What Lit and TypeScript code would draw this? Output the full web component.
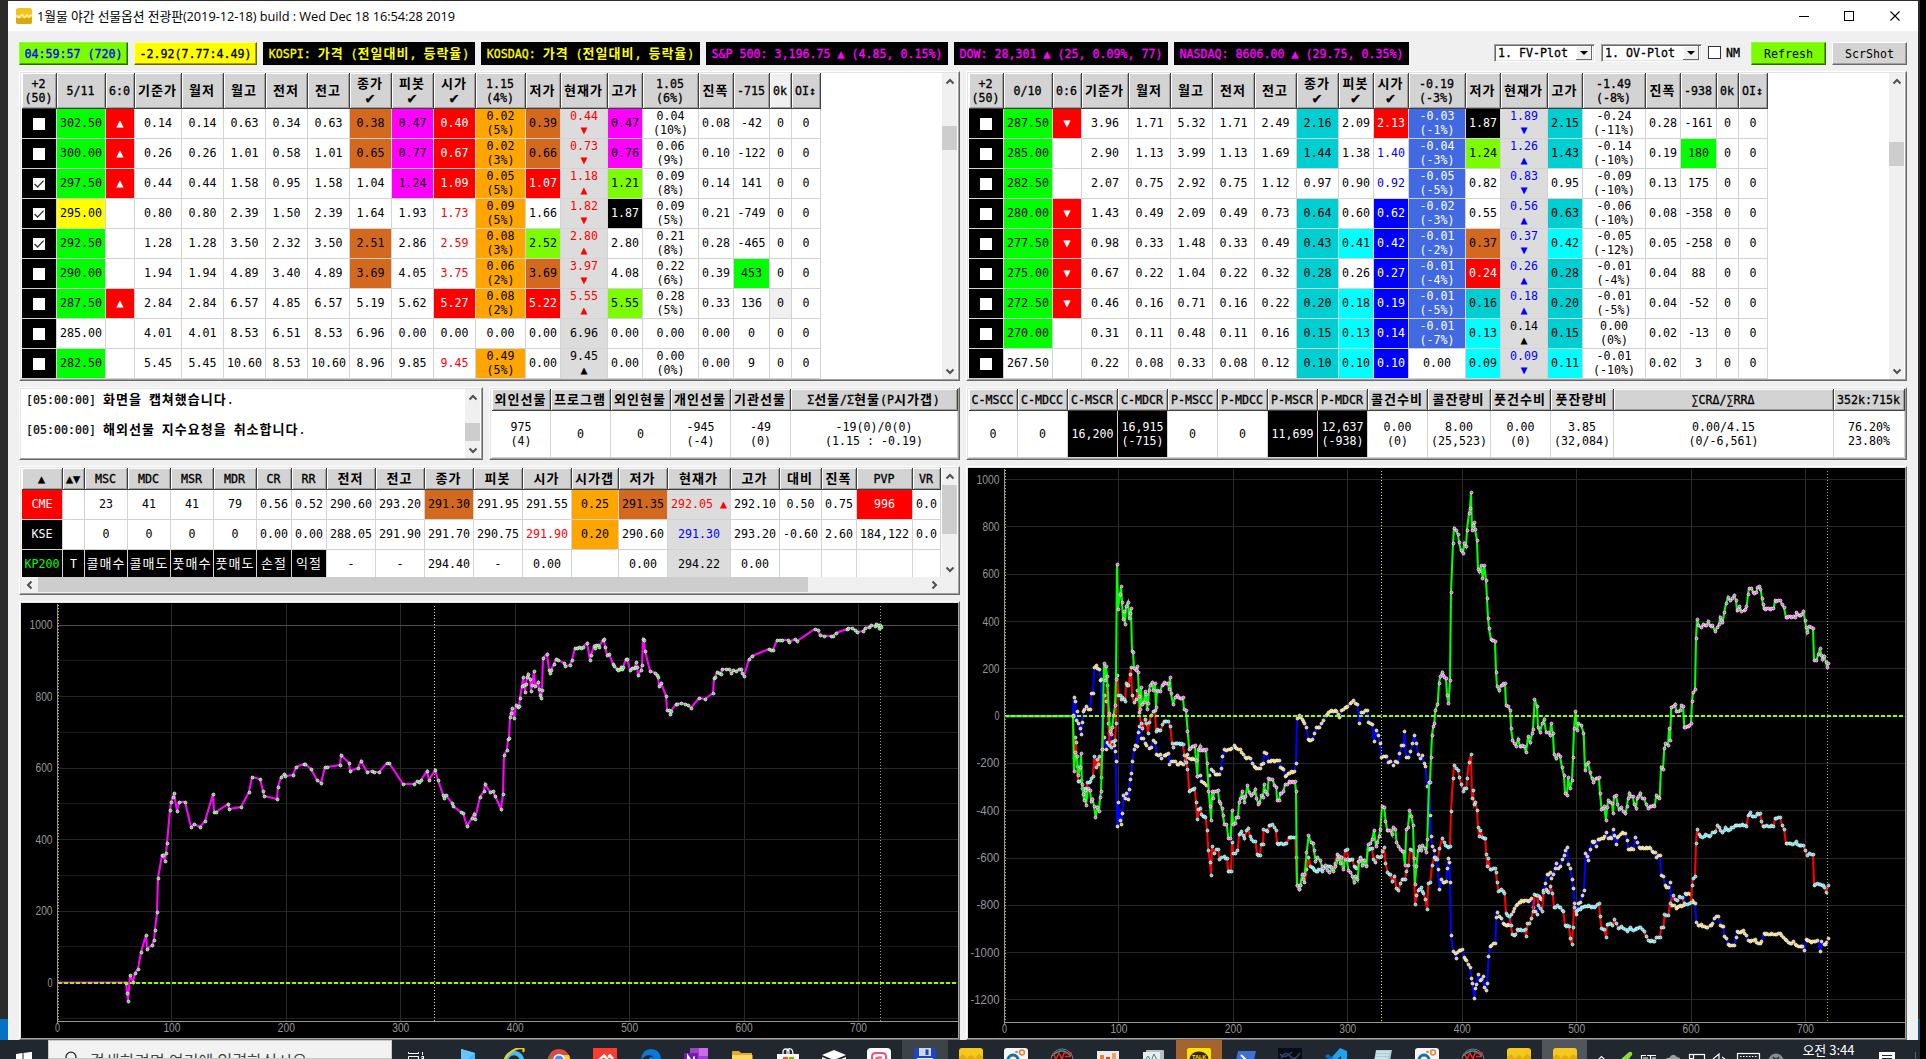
import { LitElement, html, svg, css, nothing } from "lit";
import { customElement, property } from "lit/decorators.js";

/* Splits Hangul runs out so that they can take their own face and pitch. */
function mixed(text: string) {
  return text
    .split(/([\uac00-\ud7a3]+)/)
    .filter((part) => part !== "")
    .map((part) => (/[\uac00-\ud7a3]/.test(part) ? html`<span class="ko">${part}</span>` : part));
}

const textBase = css`
  * { box-sizing: border-box; }
  .ko { font-family: "Noto Sans CJK KR", sans-serif; font-size: 13px; letter-spacing: 1px; line-height: 12px; margin-right: 0; }
`;

const chevron = (dir: string) => {
  const d: Record<string, string> = {
    up: "M1.5 6.5 L5 3 L8.5 6.5",
    down: "M1.5 3.5 L5 7 L8.5 3.5",
    left: "M6.5 1.5 L3 5 L6.5 8.5",
    right: "M3.5 1.5 L7 5 L3.5 8.5",
  };
  return html`<svg width="10" height="10" viewBox="0 0 10 10"><path d=${d[dir]} fill="none" stroke="#505050" stroke-width="2"/></svg>`;
};

/* ---------- scroll bar ---------- */
@customElement("scroll-bar")
class ScrollBar extends LitElement {
  @property() dir = "v";
  @property({ type: Number }) before = 0;
  @property({ type: Number }) size = 20;
  static styles = css`
    :host { display: block; flex: none; background: #f0f0f0; }
    .bar { display: flex; height: 100%; width: 100%; align-items: center; }
    .v { flex-direction: column; }
    .btn { width: 15px; height: 17px; flex: none; display: flex; align-items: center; justify-content: center; }
    .h .btn { width: 17px; height: 15px; }
    .thumb { background: #cdcdcd; flex: none; width: 15px; }
    .h .thumb { height: 15px; }
    .fill { flex: 1; }
    .gap { flex: none; }
  `;
  render() {
    const v = this.dir === "v";
    const prop = v ? "height" : "width";
    return html`<div class="bar ${this.dir}">
      <div class="btn">${chevron(v ? "up" : "left")}</div>
      <div class="gap" style="${prop}:${this.before}px"></div>
      <div class="thumb" style="${prop}:${this.size}px"></div>
      <div class="fill"></div>
      <div class="btn">${chevron(v ? "down" : "right")}</div>
    </div>`;
  }
}

/* ---------- quote grid ----------
   A cell is "text~style"; "_" breaks the line, "." alone is empty, "#0" and "#1" are check boxes. */
@customElement("quote-grid")
class QuoteGrid extends LitElement {
  @property({ attribute: false }) widths: number[] = [];
  @property({ attribute: false }) head: string[] = [];
  @property({ attribute: false }) rows: string[][] = [];
  @property({ type: Number }) headHeight = 22;
  @property({ type: Number }) rowHeight = 30;
  static styles = [
    textBase,
    css`
      :host { display: block; flex: none; overflow: hidden; background: #fff; font: 11.63px/14px "DejaVu Sans Mono", monospace; color: #000; }
      .row { display: grid; }
      .cell { display: flex; align-items: center; justify-content: center; text-align: center; white-space: pre;
        border-right: 1px solid #d3d3d3; border-bottom: 1px solid #d3d3d3; overflow: hidden; }
      .cell .ko { font-weight: 400; }
      .td { padding-bottom: 1px; }
      .th { background: #d3d3d3; border-right: 1px solid #404040; border-bottom: 1px solid #404040;
        box-shadow: inset 1px 1px #fff, inset -1px -1px #a0a0a0; -webkit-text-stroke: 0.3px #000; padding: 1px 1px 0 0; }
      .th .ko { font-weight: 700; -webkit-text-stroke: 0; }
      .th.hot { background: #f0f0f0; }
      .tick { font-size: 15px; }
      .g { background: #00ff00; } .y { background: #ffff00; } .c { background: #d2691e; } .m { background: #ff00ff; }
      .r { background: #ff0000; color: #fff; } .R { color: #ff0000; } .B { color: #0000ff; } .o { background: #ffa500; }
      .w { background: #7cfc00; } .k { background: #000; color: #fff; } .s { background: #dcdcdc; border-bottom-color: #d6d6d6; }
      .sr { background: #dcdcdc; color: #ff0000; } .sb { background: #dcdcdc; color: #0000ff; }
      .t { background: #00ced1; } .a { background: #00ffff; } .b { background: #0000ff; color: #fff; }
      .l { background: #4169e1; color: #fff; } .kg { background: #000; color: #00ff00; } .f { background: #f0f0f0; }
      .box { width: 12px; height: 12px; display: block; background: #fff; margin-top: 1px; }
    `,
  ];
  private content(t: string) {
    if (t === ".") return nothing;
    if (t === "#0" || t === "#1")
      return html`<svg class="box" viewBox="0 0 12 12">${t === "#1" ? svg`<path d="M1.5 6 L4.6 9 L10.6 2.6" fill="none" stroke="#333" stroke-width="1.3"/>` : nothing}</svg>`;
    const lines = t.split("_");
    return html`<div>${lines.map((l) => html`<div>${l === "✔" ? html`<span class="tick">✔</span>` : mixed(l)}</div>`)}</div>`;
  }
  private line(cells: string[], extra: string, h: number) {
    const cols = this.widths.map((w) => w + "px").join(" ");
    return html`<div class="row" style="grid-template-columns:${cols};height:${h}px">
      ${cells.map((c) => {
        const [t, k = ""] = c.split("~");
        return html`<div class="cell ${extra} ${k}">${this.content(t)}</div>`;
      })}
    </div>`;
  }
  render() {
    return html`${this.line(this.head, "th", this.headHeight)}${this.rows.map((r) => this.line(r, this.rowHeight === 30 ? "td" : "", this.rowHeight))}`;
  }
}

/* ---------- line plots ---------- */
interface Series { line: string; dot: string; points: number[][]; }
interface Plot {
  left: number; top: number; width: number; height: number;
  axisX: number; zeroY: number; perUnit: number; labels: number[]; minor: number[]; series: Series[];
}

const pairs = (text: string, dx: number, ox: number, oy: number, ky: number): number[][] =>
  text.trim().split(/\s+/).map((p) => {
    const [x, y] = p.split(",").map(Number);
    return [ox + (x + dx) / 3, oy + y / ky];
  });

function dense(points: number[][]): number[][] {
  const out: number[][] = [];
  points.forEach((p, i) => {
    out.push(p);
    const n = points[i + 1];
    if (!n) return;
    const dx = n[0] - p[0];
    const steps = Math.round(dx / 1.6);
    if (steps > 1 && Math.abs(n[1] - p[1]) < 7)
      for (let s = 1; s < steps; s++) out.push([p[0] + (dx * s) / steps, p[1] + ((n[1] - p[1]) * s) / steps + (s % 2 ? 0.5 : -0.4)]);
  });
  return out;
}

const FV = [
  ...pairs(`378,1179 381,1209 384,1233 390,1155 399,1176 405,1149 414,1137 423,1086 438,1035 441,1077 456,1065 462,1050 465,1020 471,966 474,864 486,795 489,795 495,813 498,789 501,759 510,660 513,636 519,621 522,609 531,663 537,636 555,636 573,711 582,702 600,711 615,693 639,612 642,666 648,666 684,642 687,657 723,651 747,606 756,561 780,567 789,603 792,618 831,627 834,591 843,561 852,552 855,558 879,555 888,531 912,522 915,522 933,537 951,570 963,579 975,531 981,531 1020,525 1023,495 1047,519 1050,543 1074,534 1083,513 1101,546 1116,543 1122,546 1137,546 1161,519 1167,519 1209,582 1242,582 1251,573 1257,576 1263,570 1281,543 1287,570 1305,540 1314,570 1329,615 1332,624 1338,615 1356,639 1359,648 1383,666 1389,669 1401,708 1416,684 1422,672 1425,687 1440,621 1452,603 1455,582 1470,606 1479,603 1485,618`, 0, 0, 590, 3),
  ...pairs(`63,657 69,612 72,495 81,480 84,447 87,444 90,381 93,369 96,354 102,384 108,345 114,351 117,348 120,324 126,288 129,261 132,285 135,306 138,282 141,261 144,252 150,267 153,303 156,285 162,243 165,288 174,276 177,297 180,315 183,324 186,300 189,204 201,192 207,240 210,249 213,240 222,222 228,207 234,210 252,219 255,228 270,225 276,210 285,174 291,174 297,171 303,174 309,171 321,159 330,210 333,195 342,168 345,174 348,165 354,165 357,171 369,150 372,147 375,171 381,195 387,192 399,222 402,228 411,237 414,240 420,237 423,231 426,237 429,231 438,207 441,207 450,240 456,234 462,234 465,231 468,216 471,231 474,255 483,240 486,225 489,147 492,150 495,183 510,243 525,249 531,255 534,261 537,288 543,279 558,318 561,360 567,360 570,372 573,363 588,342 591,342 603,339 615,342 624,345 633,354 657,324 675,327 699,309 702,264 705,261 711,246 717,249 723,252 726,237 738,237 747,237 753,249 759,240 768,243 777,237 783,237 786,249 792,258 807,207 816,198 867,177 873,180 879,180 891,150 900,150 906,150 924,150 927,156 945,147 951,153 1005,117 1014,120 1020,135 1032,138 1053,138 1059,138 1068,129 1101,117 1104,114 1116,114 1125,120 1131,126 1149,123 1155,114 1167,111 1173,105 1185,108 1188,102 1194,105 1197,114 1200,105 1203,111`, 1440, 0, 590, 3),
];

const KY = 2.6177;
const ov = (a: string, b: string) => [...pairs(a, 0, 960, 459.4, KY), ...pairs(b, 1440, 960, 459.4, KY)];

const OV_BLUE = ov(
  `339,668 342,620 345,631 348,682 351,657 354,690 360,703 363,717 366,685 370,656 374,652 378,643 384,653 390,652 394,610 399,610 403,541 408,537 413,546 418,548 421,576 424,574 427,757 433,725 438,757 442,738 446,740 449,715 453,738 459,738 463,745 465,762 468,788 471,958 474,895 480,943 483,952 487,924 490,876 496,885 500,873 504,888 507,862 510,835 514,820 517,788 522,756 527,745 531,750 534,713 539,697 543,728 550,727 555,740 560,747 567,753 573,752 579,733 586,738 590,769 600,771 605,780 612,772 620,769 626,768 629,797 634,787 645,787 651,796 661,791 669,795 675,785 683,770 689,781 698,780 707,784 711,786 713,828 720,826 725,840 733,846 740,850 747,824 753,810 759,815 765,822 778,822 784,806 788,776 794,757 805,757 815,754 822,746 830,753 841,757 849,770 855,779 871,780 877,794 882,800 890,806 900,806 905,795 910,793 913,765 920,766 925,787 940,786 957,785 961,803 971,810 976,827 985,820 993,815 1004,814 1008,793 1011,675 1018,668 1026,677 1034,688 1040,698 1044,730 1052,733 1058,731 1064,714 1070,700 1078,698 1085,688 1091,680 1098,668 1106,659 1115,655 1130,656 1138,672 1145,655 1155,648 1163,643 1170,636 1180,628 1186,636 1193,638 1198,688 1205,659 1221,655 1226,685 1236,692 1242,735 1249,707 1255,720 1260,740 1265,779 1270,775 1280,775 1285,790 1292,787 1299,798 1306,788 1313,791 1319,767 1325,747 1330,747 1334,710 1338,779 1345,779 1352,762 1358,740 1363,720 1369,740 1374,770 1380,780 1387,773 1392,793 1397,800 1401,853 1408,842 1410,930 1413,985 1417,1010 1422,1020 1427,1045 1434,1071 1438,1122 1443,1098 1450,1105 1458,1103 1462,1068 1465,1042 1468,1052 1470,1105 1473,1243 1479,1285 1486,1292`,
  `48,1305 51,1288 58,1283 66,1281 72,1300 80,1308 84,1320 90,1327 94,1356 98,1370 102,1408 106,1382 110,1372 114,1346 120,1362 129,1352 133,1380 138,1388 141,1370 146,1298 150,1272 160,1265 166,1264 169,1196 171,1183 177,1193 184,1200 190,1212 198,1217 210,1217 214,1190 220,1180 228,1165 237,1158 245,1152 258,1153 265,1155 274,1147 279,1170 285,1180 291,1190 297,1142 305,1150 311,1125 316,1108 322,1083 330,1080 334,1094 340,1085 345,1068 348,1055 355,1068 361,1064 366,1044 372,1035 375,1020 381,1013 385,1058 391,1068 396,1097 400,1120 404,1160 409,1188 414,1160 420,1156 427,1138 432,1125 437,1028 442,1036 446,1048 450,1018 456,998 464,998 468,1010 474,992 485,990 493,985 500,975 504,990 510,988 515,990 519,966 523,982 528,1006 532,988 540,980 546,975 556,976 561,995 565,1018 580,1018 586,988 591,1000 598,1014 610,1015 620,1013 632,1015 637,1025 645,1027 649,1040 654,1035 660,1034 663,1087 670,1088 675,1112 680,1117 686,1117 690,1104 693,1165 703,1165 708,1172 720,1166 730,1165 735,1134 745,1134 752,1137 756,1152 765,1160 769,1210 774,1218 783,1216 793,1221 803,1224 810,1217 818,1213 823,1198 830,1193 836,1194 842,1218 850,1220 853,1245 860,1252 864,1268 872,1270 882,1269 888,1250 891,1233 900,1235 910,1230 918,1243 925,1258 935,1256 945,1254 955,1265 965,1260 972,1238 985,1240 1005,1241 1020,1238 1030,1249 1040,1256 1050,1265 1060,1260 1070,1270 1080,1272 1088,1272 1093,1283 1098,1255 1110,1260 1122,1260 1133,1256 1140,1285 1145,1260 1152,1268 1160,1262 1164,1252`
);
const OV_RED = ov(
  `339,670 342,780 345,725 348,738 351,800 354,840 363,838 368,860 375,858 378,865 383,842 391,840 395,833 399,827 403,775 408,803 411,782 415,795 419,776 423,830 427,757 433,615 438,632 441,590 445,690 449,745 455,752 460,735 465,732 468,690 471,563 475,615 480,616 484,627 488,620 492,625 496,630 498,584 506,590 510,560 513,542 516,615 522,633 528,625 533,603 538,660 543,690 548,703 555,678 560,690 564,714 568,685 573,668 580,658 585,654 588,710 593,704 602,708 607,692 612,683 625,684 631,697 636,740 640,751 645,741 657,741 669,744 673,772 679,790 683,810 688,866 696,862 704,858 708,895 712,940 716,915 720,910 725,928 737,935 741,968 745,1020 750,1052 753,1086 756,1012 762,1028 769,1018 775,1018 778,1045 785,1040 792,1038 801,1042 805,1076 813,1076 816,1000 820,1028 827,1028 833,1020 837,980 845,972 853,990 860,970 864,963 870,985 880,998 887,998 891,1032 900,1035 903,1005 909,1005 911,967 918,970 923,972 927,955 938,953 944,962 948,970 951,1004 965,1004 980,1003 987,987 1000,987 1006,987 1008,1040 1011,1114 1017,1122 1021,1112 1027,1087 1034,1105 1040,1070 1046,1040 1052,1064 1060,1067 1068,1076 1080,1070 1087,1077 1093,1065 1110,1062 1118,1070 1125,1055 1131,1032 1140,1042 1145,1040 1150,1062 1155,1021 1161,1018 1165,1045 1178,1045 1182,1062 1190,1068 1196,1050 1202,1040 1210,1050 1219,1060 1224,1018 1236,1016 1241,1045 1247,1052 1252,1037 1263,1038 1268,1025 1272,1013 1277,1055 1283,1080 1292,1085 1297,1102 1304,1089 1309,1121 1316,1127 1320,1108 1327,1096 1335,1098 1339,1075 1345,1060 1350,1018 1357,1020 1362,1060 1365,1162 1370,1140 1374,1126 1383,1119 1391,1133 1396,1150 1401,1175 1405,1107 1411,1105 1416,1060 1422,1040 1427,1040 1433,1045 1439,1015 1446,990 1452,1000 1461,1012 1470,1010 1473,918 1479,832 1482,798`,
  `48,806 54,812 58,830 64,848 69,866 74,860 79,860 81,832 87,790 93,770 96,885 99,864 102,902 106,895 111,916 114,962 118,984 122,968 128,987 136,990 139,1032 142,1062 144,1043 150,1070 165,1068 168,1080 171,1105 176,1128 185,1122 194,1133 198,1185 208,1193 213,1218 217,1242 227,1242 233,1227 245,1230 255,1228 258,1245 263,1212 268,1213 274,1198 279,1180 284,1137 292,1140 295,1165 306,1180 311,1132 318,1122 326,1132 332,1116 338,1134 342,1170 352,1166 362,1170 370,1182 375,1218 387,1220 391,1252 396,1266 399,1224 402,1170 408,1180 416,1176 425,1170 437,1168 450,1167 462,1170 472,1162 477,1160 480,1195 485,1225 493,1228 498,1248 501,1215 510,1213 517,1218 523,1203 529,1213 536,1225 545,1220 555,1228 562,1232 570,1222 580,1230 590,1225 602,1222 612,1233 618,1245 625,1257 635,1257 644,1260 649,1248 660,1248 663,1224 670,1223 674,1190 685,1192 690,1160 700,1140 706,1150 712,1153 718,1142 727,1145 733,1160 742,1162 753,1157 756,1112 759,1094 765,1089 768,1002 771,966 778,980 787,988 797,979 807,984 818,975 827,972 832,955 838,962 847,975 857,960 865,968 875,962 885,955 897,957 907,953 920,958 924,930 932,922 937,932 946,932 951,924 961,925 964,945 969,958 985,958 1001,958 1005,937 1020,935 1026,955 1032,966 1038,1002 1052,1004 1063,1002 1069,998 1077,1008 1090,1008 1095,1020 1101,1034 1108,1028 1119,1031 1122,1112 1132,1108 1142,1110 1150,1112 1154,1118 1159,1130 1164,1112`
);
const OV_GREEN = ov(
  `339,670 342,814 346,765 351,775 354,825 361,803 363,767 366,849 370,875 372,890 375,865 378,903 384,860 390,864 394,893 398,887 402,905 407,935 412,908 417,918 420,882 423,868 427,757 432,531 435,576 438,540 441,565 447,662 450,709 453,718 457,698 461,667 465,641 468,573 471,272 474,390 480,350 483,330 486,372 489,416 492,396 495,430 498,382 504,371 507,413 510,401 513,387 516,500 519,502 522,546 528,550 531,539 534,554 537,618 540,652 543,594 546,640 552,633 555,604 558,612 561,652 564,636 567,603 570,588 576,582 579,603 585,584 588,646 591,603 600,604 606,590 614,581 624,585 627,600 630,567 633,610 639,638 645,620 651,615 660,622 669,621 672,652 678,655 683,710 688,757 696,750 705,747 708,786 712,827 715,757 720,748 722,760 730,758 738,757 741,793 746,866 750,905 753,942 756,866 759,886 763,866 774,863 777,892 781,899 786,910 789,930 793,952 800,953 805,989 812,990 816,916 820,952 825,950 829,934 834,935 837,895 842,886 846,867 850,882 853,895 857,879 862,852 868,869 873,878 880,873 885,862 890,885 895,900 899,896 904,878 909,882 912,849 916,868 922,875 926,832 932,834 938,836 943,850 949,855 951,889 957,889 961,873 970,867 975,849 982,849 988,840 1000,842 1005,840 1008,867 1011,1114 1017,1122 1021,1112 1027,1083 1030,1098 1034,1083 1040,1026 1046,981 1053,1001 1059,1003 1062,1021 1067,1050 1073,1040 1080,1047 1086,1062 1091,1068 1097,1060 1103,1074 1109,1079 1115,1066 1121,1075 1127,1064 1133,1045 1137,1038 1141,1055 1145,1040 1149,1070 1155,1046 1161,1045 1165,1074 1172,1078 1177,1088 1182,1104 1187,1089 1193,1098 1197,1051 1202,1042 1207,1060 1213,1047 1219,1062 1224,1006 1231,1004 1236,993 1242,968 1248,1012 1252,1000 1257,985 1261,965 1266,907 1273,909 1277,946 1282,969 1290,968 1296,980 1300,961 1306,967 1310,1001 1316,1010 1322,1018 1330,1025 1335,1061 1339,966 1344,960 1349,916 1354,932 1359,955 1362,1042 1365,1110 1369,1064 1374,1022 1379,1011 1384,1020 1388,1009 1395,1015 1399,1027 1402,992 1407,842 1410,843 1413,777 1416,719 1420,697 1423,690 1426,654 1433,638 1437,583 1441,566 1446,555 1450,563 1458,571 1461,615 1466,636 1470,576 1473,345 1479,217 1482,178`,
  `48,183 54,195 57,214 63,237 69,243 73,217 78,225 81,183 87,138 90,126 93,84 96,183 99,170 102,162 105,180 111,210 114,285 118,292 123,274 128,308 133,275 138,314 141,362 144,413 147,440 153,470 165,474 168,554 171,592 177,603 183,588 195,584 198,642 205,645 211,655 213,702 218,732 228,748 234,730 240,748 252,748 258,765 264,724 270,738 276,716 279,704 284,625 291,643 294,700 300,711 306,690 312,678 318,711 324,712 330,719 333,688 339,716 342,769 348,781 354,770 360,774 366,805 372,825 375,872 381,877 384,831 390,858 396,837 399,777 402,702 407,657 411,707 416,689 423,693 431,715 435,813 440,795 445,792 450,818 456,833 461,843 468,832 477,831 480,873 485,915 493,907 498,942 501,909 505,890 510,895 516,898 519,924 522,880 528,878 533,900 537,915 543,908 550,919 556,925 561,905 564,885 568,871 574,880 579,880 582,900 588,910 591,886 600,871 606,885 612,884 618,900 624,910 630,905 644,905 649,877 659,884 663,803 669,808 673,754 677,741 684,746 687,702 690,733 694,646 705,638 709,657 720,655 724,641 729,643 733,698 745,697 753,688 756,631 759,608 765,601 768,466 771,416 776,432 783,438 790,429 800,432 804,422 810,432 818,433 825,447 831,438 837,430 840,412 848,424 853,397 858,375 864,358 870,368 876,362 882,353 888,366 891,393 899,383 905,395 912,394 920,382 924,350 927,335 934,335 940,346 948,346 952,334 957,330 962,338 966,362 969,377 972,388 985,388 1001,388 1005,367 1020,367 1026,378 1032,385 1038,412 1050,408 1065,412 1069,399 1077,405 1085,404 1090,396 1095,418 1098,438 1101,451 1108,435 1119,439 1122,523 1129,523 1135,508 1140,492 1144,510 1148,522 1152,513 1158,528 1161,541 1164,532`
);

const range = (from: number, to: number, step: number) => {
  const out: number[] = [];
  for (let v = from; v <= to; v += step) out.push(v);
  return out;
};

const FV_PLOT: Plot = {
  left: 21, top: 603, width: 937, height: 435, axisX: 57.5, zeroY: 982.5, perUnit: 0.3574,
  labels: range(0, 1000, 200), minor: [-100, 100, 300, 500, 700, 900],
  series: [{ line: "#ff00ff", dot: "#55e055", points: FV }],
};
const OV_PLOT: Plot = {
  left: 968, top: 467, width: 937, height: 571, axisX: 1004.5, zeroY: 715.1, perUnit: 0.2365,
  labels: range(-1200, 1000, 200), minor: [],
  series: [
    { line: "#0000ff", dot: "#f0d050", points: dense(OV_BLUE) },
    { line: "#ff0000", dot: "#40e0e8", points: dense(OV_RED) },
    { line: "#00ff00", dot: "#f050e8", points: dense(OV_GREEN) },
  ],
};

@customElement("line-plot")
class LinePlot extends LitElement {
  @property({ attribute: false }) plot!: Plot;
  static styles = css`
    :host { display: block; }
    svg { display: block; background: #000; }
    text { font: 13.5px "Liberation Sans", Arial, sans-serif; fill: #969696; }
    .crisp { shape-rendering: crispEdges; }
  `;
  render() {
    const p = this.plot;
    const right = p.left + p.width;
    const base = 1021.5;
    const X = (v: number) => p.axisX + v * 1.1443;
    const Y = (v: number) => p.zeroY - v * p.perUnit;
    const label = (v: number) => String(v);
    const len = (v: number) => label(v).length * 6 - 1;
    return html`<svg width=${p.width} height=${p.height} viewBox="${p.left} ${p.top} ${p.width} ${p.height}">
      <g class="crisp" stroke-width="1">
        ${range(100, 700, 100).map((v) => svg`<line x1=${X(v)} x2=${X(v)} y1=${p.top + 1} y2=${base} stroke="#2c2c2c"/>`)}
        ${p.minor.map((v) => svg`<line x1=${p.axisX} x2=${right} y1=${Y(v)} y2=${Y(v)} stroke="#1c1c1c"/>`)}
        ${p.labels.map((v) => svg`<line x1=${p.axisX} x2=${right} y1=${Y(v)} y2=${Y(v)} stroke=${v === 1000 && p.minor.length ? "#505050" : "#262626"}/>`)}
        <line x1=${p.axisX} x2=${p.axisX} y1=${p.top + 1} y2=${base + 1} stroke="#969696"/>
        <line x1=${p.axisX} x2=${right} y1=${base} y2=${base} stroke="#969696"/>
      </g>
      ${p.labels.map((v) => svg`<text x=${p.axisX - 5 - len(v)} y=${Y(v) + 4} textLength=${len(v)} lengthAdjust="spacingAndGlyphs">${label(v)}</text>`)}
      ${range(0, 700, 100).map((v) => svg`<text x=${X(v) - len(v) / 2} y="1032" textLength=${len(v)} lengthAdjust="spacingAndGlyphs">${label(v)}</text>`)}
      ${p.series.map((s) => svg`
        <polyline fill="none" stroke=${s.line} stroke-width="2.1" points=${`${p.axisX},${p.zeroY} ${s.points[0][0]},${p.zeroY} ` + s.points.map((q) => q.map((n) => n.toFixed(1)).join(",")).join(" ")}/>
        ${s.points.map((q) => svg`<circle cx=${Math.floor(q[0]) + 0.5} cy=${Math.floor(q[1]) + 0.5} r="1.5" fill=${s.dot} stroke="#fff" stroke-opacity="0.85" stroke-width="0.8"/>`)}`)}
      <g class="crisp">
        <line x1=${p.axisX} x2=${right} y1=${p.zeroY} y2=${p.zeroY} stroke="#8cff00" stroke-width="2" stroke-dasharray="4 2"/>
        <line x1=${p.axisX + 1} x2=${p.axisX + 1} y1=${p.top + 2} y2=${base} stroke="#b0b060" stroke-dasharray="1 2"/>
        <line x1=${X(330) - 0.6} x2=${X(330) - 0.6} y1=${p.top + 3} y2=${base} stroke="#e6e664" stroke-dasharray="1 2"/>
        <line x1=${X(720) - 0.6} x2=${X(720) - 0.6} y1=${p.top + 3} y2=${base} stroke="#a8a860" stroke-dasharray="1 2"/>
      </g>
    </svg>`;
  }
}

/* ---------- market data ---------- */
const rowsOf = (text: string) => text.trim().split("\n").map((l) => l.trim().split(/ +/));

const CALL_W = [35, 49, 29, 47, 42, 42, 42, 42, 42, 42, 42, 50, 35, 47, 35, 56, 35, 36, 22, 29];
const CALL_H = "+2_(50) 5/11 6:0 기준가 월저 월고 전저 전고 종가_✔ 피봇_✔ 시가_✔ 1.15_(4%) 저가 현재가 고가 1.05_(6%) 진폭 -715 0k~hot OI↕".split(" ");
const CALL_R = rowsOf(`
#0~k 302.50~g ▲~r 0.14 0.14 0.63 0.34 0.63 0.38~c 0.47~m 0.40~r 0.02_(5%)~o 0.39~c 0.44_▼~sr 0.47~m 0.04_(10%) 0.08 -42 0 0
#0~k 300.00~g ▲~r 0.26 0.26 1.01 0.58 1.01 0.65~c 0.77~m 0.67~r 0.02_(3%)~o 0.66~c 0.73_▼~sr 0.76~m 0.06_(9%) 0.10 -122 0 0
#1~k 297.50~g ▲~r 0.44 0.44 1.58 0.95 1.58 1.04 1.24~m 1.09~r 0.05_(5%)~o 1.07~r 1.18_▲~sr 1.21~w 0.09_(8%) 0.14 141 0 0
#1~k 295.00~y . 0.80 0.80 2.39 1.50 2.39 1.64 1.93 1.73~R 0.09_(5%)~o 1.66 1.82_▼~sr 1.87~k 0.09_(5%) 0.21 -749 0 0
#1~k 292.50~g . 1.28 1.28 3.50 2.32 3.50 2.51~c 2.86 2.59~R 0.08_(3%)~o 2.52~w 2.80_▲~sr 2.80 0.21_(8%) 0.28 -465 0 0
#0~k 290.00~g . 1.94 1.94 4.89 3.40 4.89 3.69~c 4.05 3.75~R 0.06_(2%)~o 3.69~c 3.97_▼~sr 4.08 0.22_(6%) 0.39 453~g 0 0
#0~k 287.50~g ▲~r 2.84 2.84 6.57 4.85 6.57 5.19 5.62 5.27~r 0.08_(2%)~o 5.22~r 5.55_▲~sr 5.55~w 0.28_(5%) 0.33 136 0~f 0
#0~k 285.00 . 4.01 4.01 8.53 6.51 8.53 6.96 0.00 0.00 0.00 0.00 6.96~s 0.00 0.00 0.00 0 0 0
#0~k 282.50~g . 5.45 5.45 10.60 8.53 10.60 8.96 9.85 9.45~R 0.49_(5%)~o 0.00 9.45_▲~s 0.00 0.00_(0%) 0.00 9 0 0`);

const PUT_W = [35, 49, 29, 47, 42, 42, 42, 42, 42, 35, 35, 57, 35, 47, 35, 63, 35, 36, 22, 29];
const PUT_H = "+2_(50) 0/10 0:6 기준가 월저 월고 전저 전고 종가_✔ 피봇_✔ 시가_✔ -0.19_(-3%) 저가 현재가 고가 -1.49_(-8%) 진폭 -938 0k OI↕".split(" ");
const PUT_R = rowsOf(`
#0~k 287.50~g ▼~r 3.96 1.71 5.32 1.71 2.49 2.16~t 2.09 2.13~r -0.03_(-1%)~l 1.87~k 1.89_▼~sb 2.15~t -0.24_(-11%) 0.28 -161 0 0
#0~k 285.00~g . 2.90 1.13 3.99 1.13 1.69 1.44~t 1.38 1.40~B -0.04_(-3%)~l 1.24~w 1.26_▲~sb 1.43~t -0.14_(-10%) 0.19 180~g 0 0
#0~k 282.50~g . 2.07 0.75 2.92 0.75 1.12 0.97 0.90 0.92~B -0.05_(-5%)~l 0.82 0.83_▼~sb 0.95 -0.09_(-10%) 0.13 175 0 0
#0~k 280.00~g ▼~r 1.43 0.49 2.09 0.49 0.73 0.64~t 0.60 0.62~b -0.02_(-3%)~l 0.55 0.56_▲~sb 0.63~t -0.06_(-10%) 0.08 -358 0 0
#0~k 277.50~g ▼~r 0.98 0.33 1.48 0.33 0.49 0.43~t 0.41~a 0.42~b -0.01_(-2%)~l 0.37~c 0.37_▼~sb 0.42~a -0.05_(-12%) 0.05 -258 0 0
#0~k 275.00~g ▼~r 0.67 0.22 1.04 0.22 0.32 0.28~t 0.26 0.27~b -0.01_(-4%)~l 0.24~r 0.26_▲~sb 0.28~t -0.01_(-4%) 0.04 88 0 0
#0~k 272.50~g ▼~r 0.46 0.16 0.71 0.16 0.22 0.20~t 0.18~a 0.19~b -0.01_(-5%)~l 0.16~t 0.18_▲~sb 0.20~t -0.01_(-5%) 0.04 -52 0 0
#0~k 270.00~g . 0.31 0.11 0.48 0.11 0.16 0.15~t 0.13~a 0.14~b -0.01_(-7%)~l 0.13~a 0.14_▲~s 0.15~t 0.00_(0%) 0.02 -13 0 0
#0~k 267.50 . 0.22 0.08 0.33 0.08 0.12 0.10~t 0.10~a 0.10~b 0.00 0.09~a 0.09_▼~sb 0.11~a -0.01_(-10%) 0.02 3 0 0`);

const INV_W = [59, 60, 60, 60, 60, 167];
const INV_H = ["외인선물", "프로그램", "외인현물", "개인선물", "기관선물", "Σ선물/Σ현물(P시가갭)"];
const INV_R = [["975_(4)", "0", "0", "-945_(-4)", "-49_(0)", "-19(0)/0(0)_(1.15 : -0.19)"]];

const SUM_W = [49, 50, 50, 50, 50, 50, 50, 50, 60, 63, 60, 63, 220, 71];
const SUM_H = "C-MSCC C-MDCC C-MSCR C-MDCR P-MSCC P-MDCC P-MSCR P-MDCR 콜건수비 콜잔량비 풋건수비 풋잔량비 ∑CRΔ/∑RRΔ 352k:715k".split(" ");
const SUM_R = rowsOf("0 0 16,200~k 16,915_(-715)~k 0 0 11,699~k 12,637_(-938)~k 0.00_(0) 8.00_(25,523) 0.00_(0) 3.85_(32,084) 0.00/4.15_(0/-6,561) 76.20%_23.80%");

const FUT_W = [41, 22, 43, 43, 43, 43, 35, 35, 49, 49, 49, 49, 49, 47, 49, 63, 49, 42, 35, 56, 28];
const FUT_H = "▲ ▲▼ MSC MDC MSR MDR CR RR 전저 전고 종가 피봇 시가 시가갭 저가 현재가 고가 대비 진폭 PVP VR".split(" ");
const FUT_R = [
  "CME~r|.|23|41|41|79|0.56|0.52|290.60|293.20|291.30~c|291.95|291.55|0.25~o|291.35~c|292.05 ▲~sr|292.10|0.50|0.75|996~r|0.0",
  "KSE~k|.|0|0|0|0|0.00|0.00|288.05|291.90|291.70|290.75|291.90~R|0.20~o|290.60|291.30~sb|293.20|-0.60|2.60|184,122|0.0",
  "KP200~kg|T~k|콜매수~k|콜매도~k|풋매수~k|풋매도~k|손절~k|익절~k|-|-|294.40|-|0.00|.|0.00|294.22~s|0.00|.|.|.|.",
].map((l) => l.split("|"));

/* ---------- task bar icons, 24 x 24, only the top 11 rows show ---------- */
const yellowIcon = svg`<path d="M0 3 Q0 0 3 0 H21 Q24 0 24 3 V24 H0Z" fill="#f7c81c"/><path d="M0 9 L4 6 L8 10 L12 7 L16 10 L20 6 L24 9 V24 H0Z" fill="#e0ac10"/>`;
const eIcon = svg`<rect width="24" height="24" rx="3" fill="#f4f6f8"/><circle cx="9" cy="12" r="5" fill="none" stroke="#16729c" stroke-width="3"/><circle cx="18" cy="4.500" r="2.400" fill="none" stroke="#f08030" stroke-width="1.500"/><circle cx="12.500" cy="4" r="1.300" fill="#f08030"/>`;
const wfIcon = svg`<circle cx="12" cy="12" r="11" fill="#15181b" stroke="#7a8084"/><path d="M2 8 Q12 -2 21 8" stroke="#35a0a0" stroke-width="1.500" fill="none"/><path d="M3 5 l3 6 l3 -6 l3 6 l2 -6 h8 M15 8.500 h6" stroke="#e82828" stroke-width="1.600" fill="none"/>`;
const ICONS: { art: unknown; bg?: string }[] = [
  { art: svg`<path d="M5 1 L19 5 V24 H5Z" fill="#4db4f8"/><path d="M5 1 L19 5 L5 16Z" fill="#68c4ff"/>` },
  { art: svg`<circle cx="12" cy="13" r="8" fill="none" stroke="#42bdf2" stroke-width="4.500"/><path d="M2 13 Q8 1 19 0 Q23 0 21 4" fill="none" stroke="#f5cc20" stroke-width="2.200"/>` },
  { art: svg`<circle cx="12" cy="12" r="11" fill="#dd4b3e"/><path d="M1.500 8 L8 22 A11 11 0 0 1 1.500 8" fill="#1da462"/><path d="M12 7 H22 A11 11 0 0 1 12 23Z" fill="#ffcd46"/><circle cx="12" cy="12" r="5.200" fill="#4a8af4" stroke="#fff" stroke-width="1.500"/>` },
  { art: svg`<rect width="24" height="24" fill="#fb3c30"/><path d="M6 12 L11 7.500 L15 12 M15 9 L17 7.500 L20 11" stroke="#fff" stroke-width="2.400" fill="none"/>` },
  { art: svg`<path d="M2 12 Q3 1 12 1 Q21 1 22 11 V14 H9 Q9 7 15 10 Q10 3 2 12Z" fill="#0a78d4"/>` },
  { art: svg`<rect x="6" width="18" height="24" fill="#9a45cc"/><rect x="15" width="9" height="8" fill="#ca6bea"/><rect y="5" width="14" height="16" fill="#7719aa"/><path d="M4 17 V8.500 L10 17 V8.500" stroke="#fff" stroke-width="2" fill="none"/>` },
  { art: svg`<path d="M2 4 Q2 3 3 3 H9 L11 5 H22 V22 H2Z" fill="#e7a92c"/><path d="M2 7 H22.500 V22 H2Z" fill="#ffd766"/>` },
  { art: svg`<path d="M7 7 V4 Q7 1 10 1 Q13 1 13 4 V7 M11 7 V3 Q12 0 15 1 Q17 2 17 7" stroke="#fff" stroke-width="1.300" fill="none"/><rect x="1" y="6" width="22" height="18" fill="#fff"/><rect x="7" y="9" width="5" height="5" fill="#f25022"/><rect x="13" y="9" width="5" height="5" fill="#7fba00"/>` },
  { art: svg`<path d="M12 2 L24 7 L12 12 L0 7Z M0 9 L12 14 L24 9 V24 H0Z" fill="#fff"/>` },
  { art: svg`<rect width="24" height="24" rx="4" fill="#fff"/><path d="M5 24 V9 Q5 5 9 5 H15 Q19 5 19 9 V11 M9 24 V12 Q9 9.500 12 9.500 H15" stroke="#f05078" stroke-width="2" fill="none"/>` },
  { art: svg`<path d="M1 0 H21 L23 2 V24 H1Z" fill="#1c46c8"/><rect x="6" y="0" width="12" height="8" fill="#cfd8e4"/><rect x="12.500" y="1.500" width="3" height="5.500" fill="#1c46c8"/><rect x="4" y="10" width="16" height="14" fill="#e8eef4"/>`, bg: "#3c4349" },
  { art: yellowIcon },
  { art: eIcon },
  { art: wfIcon },
  { art: svg`<rect x="1" y="3" width="22" height="21" fill="#ececec"/><rect x="4" y="7" width="4" height="9" fill="#f08040"/><rect x="10" y="9" width="4" height="9" fill="#d05020"/><rect x="16" y="5" width="4" height="10" fill="#f0a070"/>` },
  { art: svg`<rect x="5" y="2" width="18" height="20" rx="1" fill="#b8c0c4"/><rect x="2" y="4" width="17" height="20" fill="#e8eeec"/><path d="M4 12 L7 8 L10 13 L13 6 L16 12" stroke="#40808c" fill="none"/>` },
  { art: svg`<rect width="24" height="24" rx="2" fill="#fce300"/><ellipse cx="12" cy="11" rx="9.500" ry="7.500" fill="#3a2020"/><text x="5" y="10.600" font-size="5.500" font-weight="700" fill="#fce300" font-family="Liberation Sans, sans-serif">TALK</text>`, bg: "#a5642c" },
  { art: svg`<path d="M5 3 H23 L19 22 H1Z" fill="#3d70d2"/><path d="M8 7 L13 12 L7 17" stroke="#fff" stroke-width="2" fill="none"/>` },
  { art: svg`<rect width="24" height="24" fill="#080c14"/><path d="M3 10 Q8 2 12 8 T22 5 M2 6 Q6 12 14 4" stroke="#2c4668" stroke-width="1.500" fill="none"/>` },
  { art: svg`<path d="M16 0 L23 3 V24 H17 V8 L4 20 L1 17Z" fill="#23a0ea"/><path d="M1 8 L4 6 L17 17 V24Z" fill="#0a70b8"/>` },
  { art: svg`<path d="M6 2 H22 L18 23 H2Z" fill="#a9cdd6"/><path d="M6 4 H20 M6 7 H19 M5 10 H18" stroke="#e8f4f6"/>` },
  { art: eIcon },
  { art: wfIcon },
  { art: yellowIcon },
  { art: yellowIcon, bg: "#50565b" },
];

/* ---------- application ---------- */
@customElement("app-root")
class AppRoot extends LitElement {
  static styles = [
    textBase,
    css`
      :host { display: block; width: 1926px; height: 1059px; overflow: hidden; background: #000;
        font: 11.63px/14px "DejaVu Sans Mono", monospace; color: #000; }
      .desk { display: grid; grid-template-columns: 8px 1910px 2px 6px; grid-template-rows: 1040px 19px; }
      .side { background: linear-gradient(#2b2b2b 0 1019px, #0573c4 1019px); }
      .edge { background: linear-gradient(#2b2b2b 0 1019px, #14507c 1019px); }
      .window { background: #f0f0f0; border-top: 1px solid #2a2a2a; height: 1040px; display: flex; flex-direction: column; }
      .title { height: 30px; background: #fff; display: flex; align-items: center; padding-left: 8px; flex: none; }
      .logo { width: 16px; height: 16px; display: block; margin-right: 5px; }
      .caption { font: 12.8px/16px "Open Sans", "Noto Sans CJK KR", sans-serif; flex: 1; white-space: pre; letter-spacing: -0.06px; padding-bottom: 1px; }
      .ctl { margin-right: 16px; }
      .tools { display: flex; gap: 6px; padding: 11px 11px 0; height: 40px; flex: none; white-space: pre; }
      .tag, .btn { height: 23px; display: flex; align-items: center; justify-content: center; -webkit-text-stroke: 0.3px currentColor; flex: none; padding-top: 1px; }
      .tag { background: #000; }
      .tag .ko, .log .ko { font-weight: 700; -webkit-text-stroke: 0; }
      .ye { color: #ffff00; } .mg { color: #ff00ff; }
      .btn { border: 1px solid; border-color: #fff #696969 #696969 #fff; box-shadow: inset -1px -1px #a0a0a0; background: #d3d3d3; }
      .lime { background: #7cfc00; border-color: #96ff32 #2f6a00 #2f6a00 #96ff32; box-shadow: inset -1px -1px #52a800; }
      .yellow { background: #ffff00; border-color: #ffff90 #6a6a00 #6a6a00 #ffff90; box-shadow: inset -1px -1px #a8a800; }
      .plain { -webkit-text-stroke: 0; }
      .w1 { width: 109px; color: #0000ff; } .w2 { width: 123px; } .w3 { width: 212px; } .w4 { width: 219px; }
      .w5 { width: 242px; } .w6 { width: 214px; } .w7 { width: 235px; } .w8 { width: 75px; }
      .right { margin-left: auto; display: flex; gap: 6px; }
      .combo { width: 101px; height: 18px; margin-top: 2px; background: #fff; border: 1px solid; border-color: #a0a0a0 #fff #fff #a0a0a0;
        box-shadow: inset 1px 1px #696969, inset -1px -1px #e3e3e3; display: flex; align-items: center; padding: 0 2px 0 3px; -webkit-text-stroke: 0.3px #000; }
      .combo span { flex: 1; }
      .drop { width: 16px; height: 14px; background: #f0f0f0; display: flex; align-items: center; justify-content: center;
        box-shadow: inset -1px -1px #696969, inset 1px 1px #fff; }
      .nm { display: flex; align-items: center; gap: 5px; height: 21px; width: 37px; -webkit-text-stroke: 0.3px #000; }
      .chk { width: 13px; height: 13px; border: 1px solid #333; background: #fff; }
      .cols { display: grid; grid-template-columns: 941px 941px; gap: 6px; padding: 0 11px; flex: none; }
      .col { display: flex; flex-direction: column; gap: 6px; }
      .frame { border: 1px solid; border-color: #fff #696969 #696969 #fff; flex: none; display: flex; }
      .inner { border: 1px solid; border-color: #e3e3e3 #a0a0a0 #a0a0a0 #e3e3e3; flex: 1; background: #fff; display: flex; min-width: 0; overflow: hidden; }
      .pad { padding-left: 1px; }
      .grow { flex: 1; min-width: 0; overflow: hidden; }
      .h310 { height: 310px; } .h73 { height: 73px; } .h129 { height: 129px; } .h439 { height: 439px; } .h574 { height: 574px; }
      .pair { display: flex; gap: 6px; height: 73px; }
      .log { width: 464px; }
      .wide { width: 471px; }
      .vs { width: 15px; margin-right: 1px; }
      .logtext { flex: 1; padding: 4px 0 0 5px; line-height: 14px; display: flex; flex-direction: column; gap: 16px; white-space: pre; -webkit-text-stroke: 0.2px #000; }
      .logtext div { height: 14px; }
      .stack { flex-direction: column; }
      .futtop { display: flex; height: 109px; }
      .hbar { display: flex; height: 16px; background: #f0f0f0; }
      .hs { width: 921px; height: 15px; }
      .task { grid-column: 1 / 4; background: #20272e; height: 19px; display: flex; overflow: hidden; }
      .start { width: 48px; padding: 12px 0 0 16px; flex: none; }
      .search { width: 344px; background: #f2f2f2; border: 1px solid #c8c8c8; height: 19px; display: flex; padding: 10px 0 0 16px; gap: 13px;
        font: 16px/18px "Noto Sans CJK KR", sans-serif; color: #444; overflow: hidden; flex: none; white-space: pre; }
      .search span { letter-spacing: 0.25px; margin-top: 0; }
      .view { width: 53.2px; padding: 12px 0 0 16px; flex: none; }
      .app { width: 45.7px; height: 19px; display: flex; justify-content: center; padding-top: 8px; flex: none; }
      .app svg, .start svg, .view svg, .search svg { flex: none; display: block; }
      .tray { flex: 1; display: flex; }
      .marks { display: block; flex: none; }
      .clock { font: 13px/16px "Noto Sans CJK KR", sans-serif; color: #fff; margin: 2px 0 0 12px; width: 70px; height: 16px; white-space: pre; }
      .note { margin-top: 12px; }
    `,
  ];

  render() {
    return html`<div class="desk">
      <div class="side"></div>
      <div class="window">
        <div class="title">
          <svg class="logo" viewBox="0 0 16 16"><rect width="16" height="16" rx="2.5" fill="#f2c21a"/><path d="M0 10 H16 V13.500 Q16 16 13.500 16 H2.500 Q0 16 0 13.500Z" fill="#dca60c"/><path d="M0.500 7.500 L3 9.500 L6 6.500 L8.500 9.500 L11 7 L13 9 L15.500 6.500" fill="none" stroke="#fff3b8" stroke-width="1.700"/></svg>
          <div class="caption">1월물 야간 선물옵션 전광판(2019-12-18) build : Wed Dec 18 16:54:28 2019</div>
          <svg class="ctl" width="104" height="14" viewBox="1798 8 104 14"><g fill="none" stroke="#000" shape-rendering="crispEdges"><path d="M1799 15.500 H1809"/><rect x="1844.500" y="10.500" width="9" height="9"/></g><path d="M1890.500 10.500 L1899.500 19.500 M1899.500 10.500 L1890.500 19.500" stroke="#000" stroke-width="1.100"/></svg>
        </div>
        <div class="tools">
          <div class="btn lime w1">04:59:57 (720)</div>
          <div class="btn yellow w2">-2.92(7.77:4.49)</div>
          <div class="tag ye w3"><div>${mixed("KOSPI: 가격 (전일대비, 등락율)")}</div></div>
          <div class="tag ye w4"><div>${mixed("KOSDAQ: 가격 (전일대비, 등락율)")}</div></div>
          <div class="tag mg w5">S&amp;P 500: 3,196.75 ▲ (4.85, 0.15%)</div>
          <div class="tag mg w6">DOW: 28,301 ▲ (25, 0.09%, 77)</div>
          <div class="tag mg w7">NASDAQ: 8606.00 ▲ (29.75, 0.35%)</div>
          <div class="right">
            ${["1. FV-Plot", "1. OV-Plot"].map((t) => html`<div class="combo"><span>${t}</span><div class="drop"><svg width="8" height="4"><path d="M0 0 H8 L4 4Z"/></svg></div></div>`)}
            <div class="nm"><div class="chk"></div>NM</div>
            <div class="btn lime w8 plain">Refresh</div>
            <div class="btn w8 plain">ScrShot</div>
          </div>
        </div>
        <div class="cols">
          <div class="col">
            <div class="frame h310"><div class="inner pad">
              <div class="grow"><quote-grid .widths=${CALL_W} .head=${CALL_H} .rows=${CALL_R} .headHeight=${36}></quote-grid></div>
              <scroll-bar class="vs" before="36" size="24"></scroll-bar>
            </div></div>
            <div class="pair">
              <div class="frame log"><div class="inner">
                <div class="logtext"><div>${mixed("[05:00:00] 화면을 캡쳐했습니다.")}</div><div>${mixed("[05:00:00] 해외선물 지수요청을 취소합니다.")}</div></div>
                <scroll-bar class="vs" before="17" size="18"></scroll-bar>
              </div></div>
              <div class="frame wide"><div class="inner pad"><quote-grid .widths=${INV_W} .head=${INV_H} .rows=${INV_R} .rowHeight=${47}></quote-grid></div></div>
            </div>
            <div class="frame h129"><div class="inner stack">
              <div class="futtop">
                <div class="grow pad"><quote-grid .widths=${FUT_W} .head=${FUT_H} .rows=${FUT_R}></quote-grid></div>
                <scroll-bar class="vs" before="0" size="49"></scroll-bar>
              </div>
              <div class="hbar"><scroll-bar class="hs" dir="h" before="0" size="770"></scroll-bar></div>
            </div></div>
            <div class="frame h439"><div class="inner"><line-plot .plot=${FV_PLOT}></line-plot></div></div>
          </div>
          <div class="col">
            <div class="frame h310"><div class="inner pad">
              <div class="grow"><quote-grid .widths=${PUT_W} .head=${PUT_H} .rows=${PUT_R} .headHeight=${36}></quote-grid></div>
              <scroll-bar class="vs" before="52" size="24"></scroll-bar>
            </div></div>
            <div class="frame h73"><div class="inner pad"><quote-grid .widths=${SUM_W} .head=${SUM_H} .rows=${SUM_R} .rowHeight=${47}></quote-grid></div></div>
            <div class="frame h574"><div class="inner"><line-plot .plot=${OV_PLOT}></line-plot></div></div>
          </div>
        </div>
      </div>
      <div class="edge"></div>
      <div></div>
      <div class="task">
        <div class="start"><svg width="16" height="16" viewBox="0 0 16 16" fill="#fff"><path d="M0 2 L6.500 1 V7.500 H0Z M7.500 0.900 L16 -0.200 V7.500 H7.500Z M0 8.500 H6.500 V15 L0 14Z M7.500 8.500 H16 V16 L7.500 15Z"/></svg></div>
        <div class="search"><svg width="12" height="18" viewBox="0 0 12 18"><circle cx="6" cy="6.200" r="5" fill="none" stroke="#222" stroke-width="1.300"/></svg><span>검색하려면 여기에 입력하십시오</span></div>
        <div class="view"><svg width="17" height="14" viewBox="0 0 17 14" fill="none" stroke="#fff"><path d="M0.500 0 V1.500 H10.500 V0 M0.500 4.500 H10.500 V11 H0.500Z M14.500 0 V3"/><rect x="14" y="4.500" width="1.500" height="2"/><path d="M14.500 8 V14"/></svg></div>
        ${ICONS.map((i) => html`<div class="app" style="background:${i.bg ?? "transparent"}"><svg width="24" height="24" viewBox="0 0 24 24">${i.art}</svg></div>`)}
        <div class="tray">
          <svg class="marks" width="203" height="19" viewBox="1587 1040 203 19">
            <g fill="none" stroke="#fff" stroke-width="1.200">
              <path d="M1597 1061 L1601.500 1056.500 L1606 1061"/>
              <path d="M1641 1055.500 H1646 M1641.500 1055 V1060 M1647 1055.500 H1656 M1650.500 1055 V1060 M1643 1058 H1648 M1652 1058 H1656"/>
              <rect x="1689.500" y="1054.500" width="15" height="12"/><path d="M1693.500 1055 V1060 M1690 1058.500 H1694"/>
              <path d="M1713 1059 L1719 1054 V1060 M1722 1057 L1726 1060"/>
              <rect x="1737.500" y="1053.500" width="22" height="12"/><path d="M1740 1056.500 H1758" stroke-dasharray="1.500 1.500"/>
            </g>
            <path d="M1620 1060 L1629 1052 Q1633 1051 1632 1055 L1628 1060Z" fill="#8ed83c"/>
            <path d="M1664 1060 Q1668 1057 1669 1058 Q1673 1052 1677 1057 Q1680 1057 1681 1060Z" fill="#9a9da0"/>
            <circle cx="1776" cy="1061" r="7.500" fill="#8a8d90"/><path d="M1773 1057 L1779 1063 M1779 1057 L1773 1063" stroke="#20272e" stroke-width="1.500"/>
          </svg>
          <div class="clock">오전 3:44</div>
          <svg class="note" width="48" height="14" viewBox="0 0 48 14"><path d="M7 0 H23 V12 H7Z" fill="#fff"/><path d="M10 3.500 H20 M10 6.500 H20" stroke="#20272e"/><path d="M43.500 -12 V14" stroke="#5a6068"/></svg>
        </div>
      </div>
    </div>`;
  }
}
